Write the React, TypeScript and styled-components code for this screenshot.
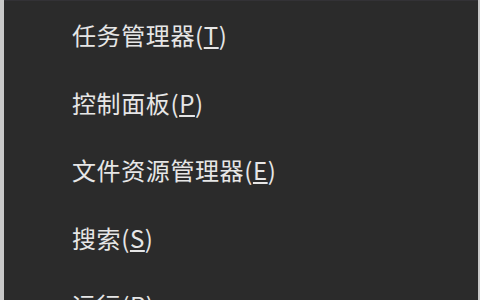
import styled, { createGlobalStyle } from 'styled-components';

const GlobalStyle = createGlobalStyle`
  html, body {
    margin: 0;
    padding: 0;
    background: #c9c9c9;
    overflow: hidden;
  }
`;

const Frame = styled.div`
  width: 480px;
  height: 300px;
  padding: 0 2px 0 4px;
  box-sizing: border-box;
  overflow: hidden;
`;

const Menu = styled.ul`
  margin: 0;
  padding: 0;
  height: 100%;
  box-sizing: border-box;
  list-style: none;
  background: #2b2b2b;
  border-top: 1px solid #333236;
`;

const Item = styled.li`
  height: 67.5px;
  display: flex;
  align-items: center;
  padding-left: 68px;
  font-family: "Noto Sans CJK SC", "Noto Sans", sans-serif;
  font-size: 24px;
  color: #e6e6e6;
  letter-spacing: 0.6px;
  white-space: nowrap;
`;

const Key = styled.span`
  text-decoration: underline;
  text-underline-offset: 2px;
`;

const items = [
  { label: '任务管理器', key: 'T' },
  { label: '控制面板', key: 'P' },
  { label: '文件资源管理器', key: 'E' },
  { label: '搜索', key: 'S' },
  { label: '运行', key: 'R' },
];

const App = () => (
  <Frame>
    <GlobalStyle />
    <Menu>
      {items.map((it) => (
        <Item key={it.key}>
          {it.label}(<Key>{it.key}</Key>)
        </Item>
      ))}
    </Menu>
  </Frame>
);

export default App;
